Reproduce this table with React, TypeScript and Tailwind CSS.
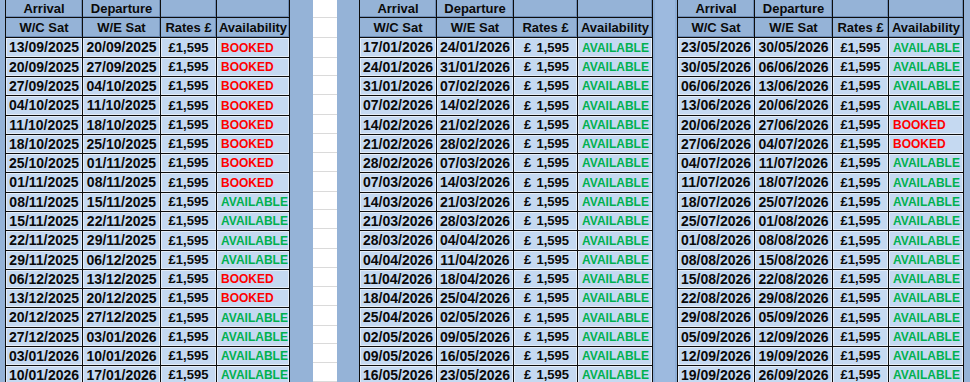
import React from "react";

type Row = { from: string; to: string; booked: boolean };

type Sheet = {
  start: [number, number, number];
  booked: number[];
  cols: [string, string, string, string];
  spacedPrice?: boolean;
};

const ROW_HEIGHTS = [
  "h-[20px]",
  "h-[19px]",
  "h-[19px]",
  "h-[20px]",
  "h-[19px]",
  "h-[19px]",
  "h-[19px]",
  "h-[20px]",
  "h-[19px]",
  "h-[19px]",
  "h-[20px]",
  "h-[19px]",
  "h-[19px]",
  "h-[19px]",
  "h-[20px]",
  "h-[19px]",
  "h-[19px]",
  "h-[19px]",
];

function fmt(d: Date) {
  const dd = String(d.getUTCDate()).padStart(2, "0");
  const mm = String(d.getUTCMonth() + 1).padStart(2, "0");
  return `${dd}/${mm}/${d.getUTCFullYear()}`;
}

function buildRows(start: [number, number, number], booked: number[]): Row[] {
  const base = Date.UTC(start[0], start[1] - 1, start[2]);
  const day = 86400000;
  return ROW_HEIGHTS.map((_, i) => ({
    from: fmt(new Date(base + i * 7 * day)),
    to: fmt(new Date(base + (i + 1) * 7 * day)),
    booked: booked.includes(i),
  }));
}

const SHEETS: Sheet[] = [
  {
    start: [2025, 9, 13],
    booked: [0, 1, 2, 3, 4, 5, 6, 7, 12, 13],
    cols: ["w-[77px]", "w-[78px]", "w-[56px]", "w-[73px]"],
  },
  {
    start: [2026, 1, 17],
    booked: [],
    cols: ["w-[77px]", "w-[77px]", "w-[64px]", "w-[75px]"],
    spacedPrice: true,
  },
  {
    start: [2026, 5, 23],
    booked: [4, 5],
    cols: ["w-[77px]", "w-[78px]", "w-[56px]", "w-[75px]"],
  },
];

// excel-ish cells: dark grid line, light bevel inside the data cells
const cell = "border-r border-b border-[#0d0d0d] flex items-center shrink-0";
const head = `${cell} bg-[#95b3d7] justify-center text-[13px] shadow-[inset_-1px_-1px_0_#6f8db5]`;
const data = `${cell} bg-[#c5d9f1] shadow-[inset_0_0_0_1px_#e4edf8,inset_-1px_-1px_0_1px_#c5d9f1]`;

function Table({ sheet }: { sheet: Sheet }) {
  const rows = buildRows(sheet.start, sheet.booked);
  const [c1, c2, c3, c4] = sheet.cols;
  return (
    <div className="flex flex-col border-l border-[#0d0d0d] shrink-0">
      <div className="flex h-[18px]">
        <div className={`${head} ${c1} text-[12.5px]`}>Arrival</div>
        <div className={`${head} ${c2} text-[12.5px]`}>Departure</div>
        <div className={`${head} ${c3}`} />
        <div className={`${head} ${c4}`} />
      </div>
      <div className="flex h-[20px]">
        <div className={`${head} ${c1}`}>W/C Sat</div>
        <div className={`${head} ${c2}`}>W/E Sat</div>
        <div className={`${head} ${c3} text-[12px]`}>Rates £</div>
        <div className={`${head} ${c4} text-[12.5px]`}>Availability</div>
      </div>
      {rows.map((r, i) => (
        <div key={r.from} className={`flex ${ROW_HEIGHTS[i]}`}>
          <div className={`${data} ${c1} justify-center text-[14px]`}>{r.from}</div>
          <div className={`${data} ${c2} justify-center text-[14px]`}>{r.to}</div>
          {sheet.spacedPrice ? (
            <div className={`${data} ${c3} justify-between pl-[10px] pr-[8px] text-[13px]`}>
              <span>£</span>
              <span>1,595</span>
            </div>
          ) : (
            <div className={`${data} ${c3} justify-center text-[13px]`}>£1,595</div>
          )}
          <div
            className={`${data} ${c4} pl-[4px] text-[12px] ${
              r.booked ? "text-[#ff0000]" : "text-[#00b050]"
            }`}
          >
            {r.booked ? "BOOKED" : "AVAILABLE"}
          </div>
        </div>
      ))}
    </div>
  );
}

function Blank() {
  return (
    <div className="flex flex-col w-[24px] shrink-0 bg-white">
      <div className="h-[18px] border-b border-[#dadada]" />
      <div className="h-[20px] border-b border-[#dadada]" />
      {ROW_HEIGHTS.map((h, i) => (
        <div key={i} className={`${h} border-b border-[#dadada]`} />
      ))}
    </div>
  );
}

export default function App() {
  return (
    <div
      className="w-[970px] h-[382px] overflow-hidden flex bg-[#95b3d7] text-[#0a0a0a] font-bold"
      style={{ fontFamily: '"Liberation Sans", Arial, sans-serif' }}
    >
      <div className="w-[5px] shrink-0" />
      <Table sheet={SHEETS[0]} />
      <div className="w-[23px] shrink-0" />
      <Blank />
      <div className="w-[22px] shrink-0" />
      <Table sheet={SHEETS[1]} />
      <div className="w-[24px] shrink-0 flex">
        <div className="w-[2px] bg-[#8eafd8]" />
        <div className="flex-1 bg-[#9dbadf]" />
        <div className="w-[2px] bg-[#8eafd8]" />
      </div>
      <Table sheet={SHEETS[2]} />
      <div className="w-[6px] shrink-0" />
    </div>
  );
}
